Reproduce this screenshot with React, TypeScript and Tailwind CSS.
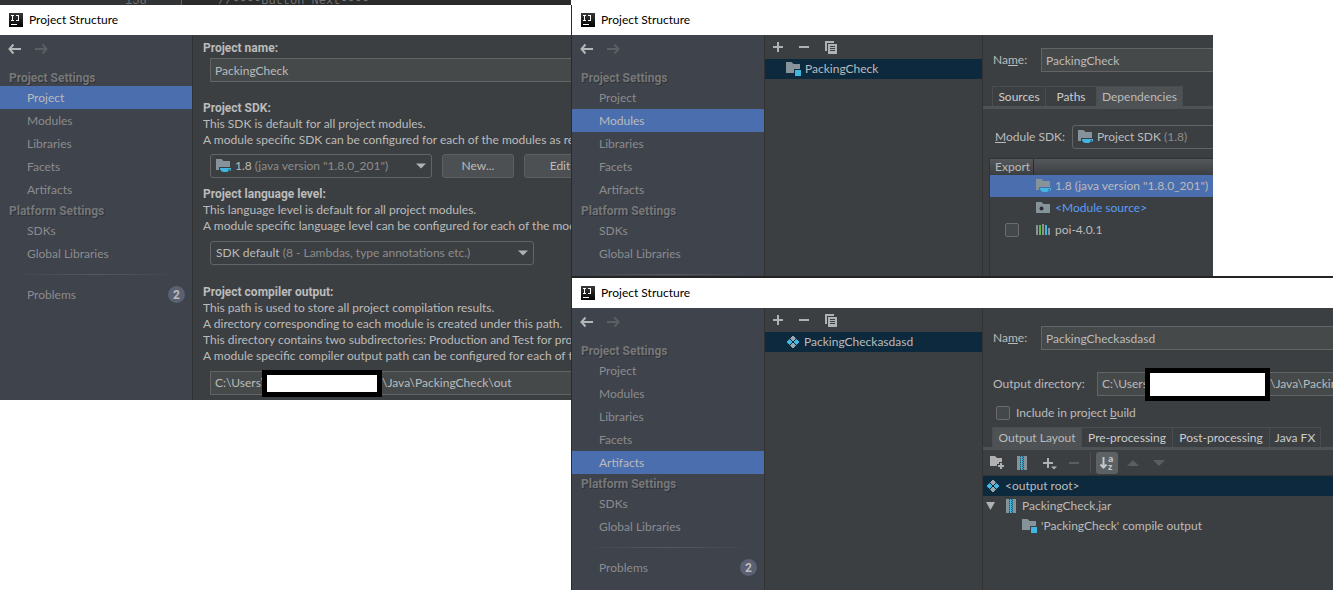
import React from 'react';
import clsx from 'clsx';

type Page = 'Project' | 'Modules' | 'Libraries' | 'Facets' | 'Artifacts';

const projectPages: Page[] = ['Project', 'Modules', 'Libraries', 'Facets', 'Artifacts'];
const platformPages = ['SDKs', 'Global Libraries'];

/* ---------- icons ---------- */

const LogoIcon = () => (
  <svg width="14" height="14" viewBox="0 0 14 14" shapeRendering="crispEdges" className="shrink-0">
    <defs>
      <linearGradient id="logo-bg" x1="0" y1="0" x2="0" y2="1">
        <stop offset="0" stopColor="#3a3a3a" />
        <stop offset="1" stopColor="#000" />
      </linearGradient>
    </defs>
    <rect width="14" height="14" fill="url(#logo-bg)" />
    <path d="M2 2.5h3M3.5 2v6M2 7.5h3M7 2.5h3M9.5 2v5M6.5 7.5h3M2 11.5h6" stroke="#fff" fill="none" />
  </svg>
);

const ArrowIcon = ({ forward }: { forward?: boolean }) => (
  <svg width="13" height="12" viewBox="0 0 13 12" className={forward ? 'rotate-180 text-[#5b5f63]' : 'text-[#b4b6b8]'}>
    <path d="M1.5 6H13M5.5 1.5L1.500 6L5.500 10.5" stroke="currentColor" strokeWidth="2" fill="none" />
  </svg>
);

const PlusIcon = () => (
  <svg width="10" height="10" viewBox="0 0 10 10" shapeRendering="crispEdges">
    <path d="M5 0v10M0 5h10" stroke="#afb1b3" strokeWidth="2" />
  </svg>
);

const MinusIcon = ({ disabled }: { disabled?: boolean }) => (
  <svg width="10" height="10" viewBox="0 0 10 10" shapeRendering="crispEdges">
    <path d="M0 5h10" stroke={disabled ? '#5b5e60' : '#afb1b3'} strokeWidth="2" />
  </svg>
);

const CopyIcon = () => (
  <svg width="12" height="13" viewBox="0 0 12 13" shapeRendering="crispEdges">
    <path d="M0 0h9v2H2v8H0z" fill="#afb1b3" />
    <path d="M3 3h9v10H3z" fill="#afb1b3" />
    <path d="M5 5.5h5M5 7.5h5M5 9.5h5" stroke="#3c3f41" />
  </svg>
);

const ModuleFolderIcon = () => (
  <svg width="15" height="14" viewBox="0 0 15 14" className="shrink-0">
    <path d="M0 0H5.5L7.5 2H14V7H8V11H0Z" fill="#87939a" />
    <rect x="9" y="8" width="6" height="6" fill="#40b6e0" />
  </svg>
);

const SdkFolderIcon = () => (
  <svg width="15" height="14" viewBox="0 0 15 14" className="shrink-0">
    <path d="M0 0H5.5L7.5 2H14V8H3V11H0Z" fill="#87939a" />
    <path d="M4 9H15V11.5H12.5Q11.5 13 10.5 13H7.5Q4 12.5 4 9Z" fill="#40b6e0" />
    <path d="M12.5 10H14V10.8H12.5Z" fill="#3c3f41" />
  </svg>
);

const SourceFolderIcon = () => (
  <svg width="15" height="12" viewBox="0 0 15 12" className="shrink-0">
    <path d="M0 0H5.5L7.5 2H14V11H0Z" fill="#87939a" />
    <circle cx="5.5" cy="6.5" r="2" fill="#2b2d2f" />
  </svg>
);

const NewFolderIcon = () => (
  <svg width="15" height="13" viewBox="0 0 15 13">
    <path d="M0 0H5L7 2H12V6H9V8H7V10H0Z" fill="#afb1b3" />
    <path d="M11 7V13M8 10H14" stroke="#afb1b3" strokeWidth="2" />
  </svg>
);

const LibraryIcon = () => (
  <svg width="14" height="12" viewBox="0 0 14 12" shapeRendering="crispEdges" className="shrink-0">
    <path d="M0 1h2v10H0zM6 0h2v11H6zM12 4h2v7h-2z" fill="#87939a" />
    <rect x="3" y="1" width="2" height="10" fill="#62b543" />
    <rect x="9" y="1" width="2" height="10" fill="#40b6e0" />
  </svg>
);

const ArtifactIcon = () => (
  <svg width="14" height="14" viewBox="0 0 14 14" strokeWidth="1" strokeLinejoin="round" className="shrink-0">
    <path d="M7 1L9.5 3.5L7 6L4.5 3.500ZM7 8L9.5 10.5L7 13L4.5 10.5Z" fill="#9aa7b0" stroke="#9aa7b0" />
    <path d="M3.5 4.500L6 7L3.5 9.5L1 7ZM10.5 4.5L13 7L10.5 9.5L8 7Z" fill="#40b6e0" stroke="#40b6e0" />
  </svg>
);

const ArchiveIcon = () => (
  <svg width="10" height="14" viewBox="0 0 10 14" shapeRendering="crispEdges" className="shrink-0">
    <path d="M0 0h10v14H0z" fill="#87939a" />
    <path d="M3 0h4v14H3z" fill="#2a5568" />
    <path d="M4 0h1v1h1v1h-1v1h1v1h-1v1h1v1h-1v1h1v1h-1v1h1v1h-1v1h1v1h-1v1h1v1h-2z" fill="#40b6e0" />
    <path d="M3 1h1v1h-1zM3 3h1v1h-1zM3 5h1v1h-1zM3 7h1v1h-1zM3 9h1v1h-1zM3 11h1v1h-1zM6 0h1v1h-1zM6 2h1v1h-1zM6 4h1v1h-1zM6 6h1v1h-1zM6 8h1v1h-1zM6 10h1v1h-1zM6 12h1v1h-1z" fill="#3793b4" />
  </svg>
);

const SortIcon = () => (
  <svg width="14" height="14" viewBox="0 0 14 14">
    <path d="M3.5 1V12M0.5 8.5L3.5 11.5L6.5 8.5" stroke="#c4c6c8" strokeWidth="2" fill="none" />
    <text x="8" y="6" fill="#c4c6c8" className="font-['Open_Sans'] text-[9px] font-bold">a</text>
    <text x="8" y="14" fill="#c4c6c8" className="font-['Open_Sans'] text-[9px] font-bold">z</text>
  </svg>
);

const Triangle = ({ up, className }: { up?: boolean; className: string }) => (
  <svg width="12" height="6" viewBox="0 0 12 6" className={clsx('shrink-0', className)}>
    <path d={up ? 'M0 6L6 0L12 6Z' : 'M0 0H12L6 6Z'} fill="currentColor" />
  </svg>
);

/* ---------- shared pieces ---------- */

const boldFont = "font-['Roboto',sans-serif] font-bold";

const TitleBar = () => (
  <header className="flex h-[30px] items-center gap-[6px] bg-white pl-[9px] text-black">
    <LogoIcon />
    <h1>Project Structure</h1>
  </header>
);

const NavItem = ({ label, active }: { label: string; active?: boolean }) => (
  <button
    type="button"
    className={clsx('block h-[23px] w-full pl-[27px] text-left', active ? 'bg-[#4b6eaf] text-[#bbbbbb]' : 'text-[#8c8c8c]')}
  >
    {label}
  </button>
);

const navHeading = clsx(boldFont, 'h-[18px] pt-px pl-[9px] leading-[18px] text-[#777777] [text-shadow:1px_1px_0_#2f333a]');

const Sidebar = ({ active, problems }: { active: Page; problems?: boolean }) => (
  <nav className="w-[193px] shrink-0 border-r border-[#323232] bg-[#3e434c]">
    <div className="mb-[5px] flex h-[28px] items-center gap-[14px] pl-2">
      <button type="button" aria-label="Back"><ArrowIcon /></button>
      <button type="button" aria-label="Forward"><ArrowIcon forward /></button>
    </div>
    <h2 className={navHeading}>Project Settings</h2>
    {projectPages.map((page) => (
      <NavItem key={page} label={page} active={page === active} />
    ))}
    <h2 className={navHeading}>Platform Settings</h2>
    {platformPages.map((page) => (
      <NavItem key={page} label={page} />
    ))}
    <div className="mx-[9px] mt-[9px] mb-px h-px bg-linear-to-r from-transparent via-[#575a5c] to-transparent" />
    {problems && (
      <div className="mt-2 mb-[11px] flex items-center justify-between pr-[7px]">
        <NavItem label="Problems" />
        <span className={clsx('flex size-[17px] shrink-0 items-center justify-center rounded-full bg-[#5b6073] text-[#bbbbbb]', boldFont)}>2</span>
      </div>
    )}
  </nav>
);

const ItemList = ({ icon, name }: { icon: React.ReactNode; name: string }) => (
  <div className="w-[218px] shrink-0 border-r border-[#323232]">
    <div className="flex h-[24px] items-center gap-4 pl-2">
      <button type="button" aria-label="Add"><PlusIcon /></button>
      <button type="button" aria-label="Remove"><MinusIcon /></button>
      <button type="button" aria-label="Copy"><CopyIcon /></button>
    </div>
    <div className="flex h-[20px] items-center gap-1 bg-[#0d293e] pl-[21px]">
      {icon}
      <span>{name}</span>
    </div>
  </div>
);

const fieldBox = 'h-[24px] border border-[#646464] bg-[#45494a] pl-1';

type PathFieldProps = { id: string; start: string; end: string; startWidth: string; maskSize: string; className: string };

/* path field with the user name blacked out */
const PathField = ({ id, start, end, startWidth, maskSize, className }: PathFieldProps) => (
  <div className={clsx('flex items-center border-r-0', fieldBox, className)}>
    <input id={id} defaultValue={start} className={clsx('shrink-0 bg-transparent outline-none', startWidth)} />
    <span className={clsx('shrink-0 border-[5px] border-black bg-white', maskSize)} />
    <input aria-label="Path end" defaultValue={end} className="min-w-0 flex-1 bg-transparent outline-none" />
  </div>
);

type ComboProps = { id: string; value: string; hint: string; icon?: React.ReactNode; className: string };

const Combo = ({ id, value, hint, icon, className }: ComboProps) => (
  <div className={clsx('relative flex h-[24px] items-center gap-1 rounded-[3px] border border-[#646464] px-[5px]', className)}>
    {icon}
    <span className="flex-1 whitespace-nowrap">
      {value} <span className="text-[#8c8c8c]">{hint}</span>
    </span>
    <Triangle className="w-[10px] text-[#afb1b3]" />
    <select id={id} className="absolute inset-0 w-full opacity-0">
      <option value={value} aria-label={value} />
    </select>
  </div>
);

const Tabs = ({ tabs, active }: { tabs: { label: string; width: string }[]; active: string }) => (
  <div role="tablist" className="flex border-b-[3px] border-[#4e5254] pl-[9px]">
    {tabs.map(({ label, width }) => (
      <button
        key={label}
        type="button"
        role="tab"
        aria-selected={label === active}
        className={clsx(
          'h-[20px] shrink-0 border-t border-r border-[#494d4f] leading-[20px] whitespace-nowrap',
          width,
          label === active ? 'bg-[#4e5254]' : 'bg-[#3c3f41] text-[#cccccc]',
        )}
      >
        {label}
      </button>
    ))}
  </div>
);

const Section = ({ title, lines, className }: { title: string; lines: string[]; className?: string }) => (
  <div className={clsx('leading-4 whitespace-nowrap', className)}>
    <h3 className={boldFont}>{title}</h3>
    {lines.map((line) => (
      <p key={line}>{line}</p>
    ))}
  </div>
);

const pushButton = 'h-[24px] shrink-0 rounded-[3px] border border-[#5e6060] bg-[#4c5052] text-center';

/* ---------- windows ---------- */

const ProjectWindow = () => (
  <section>
    <TitleBar />
    <div className="flex bg-[#3c3f41] text-[#bbbbbb]">
      <Sidebar active="Project" problems />
      <div className="min-w-0 flex-1 overflow-hidden pt-[5px] pb-[5px] pl-[10px]">
        <label htmlFor="project-name" className={clsx('block leading-4', boldFont)}>Project name:</label>
        <div className="mt-[2px] ml-[7px]">
          <input id="project-name" defaultValue="PackingCheck" className={clsx('block w-full border-r-0', fieldBox)} />
        </div>
        <Section
          className="mt-[18px]"
          title="Project SDK:"
          lines={[
            'This SDK is default for all project modules.',
            'A module specific SDK can be configured for each of the modules as required.',
          ]}
        />
        <div className="mt-[6px] ml-[7px] flex gap-[10px]">
          <Combo id="project-sdk" icon={<SdkFolderIcon />} value="1.8" hint='(java version "1.8.0_201")' className="w-[222px] shrink-0" />
          <button type="button" className={clsx('w-[72px]', pushButton)}>New...</button>
          <button type="button" className={clsx('w-[72px]', pushButton)}>Edit</button>
        </div>
        <Section
          className="mt-2"
          title="Project language level:"
          lines={[
            'This language level is default for all project modules.',
            'A module specific language level can be configured for each of the modules as required.',
          ]}
        />
        <Combo id="language-level" value="SDK default" hint="(8 - Lambdas, type annotations etc.)" className="mt-[7px] ml-[7px] w-[324px]" />
        <Section
          className="mt-[19px]"
          title="Project compiler output:"
          lines={[
            'This path is used to store all project compilation results.',
            'A directory corresponding to each module is created under this path.',
            'This directory contains two subdirectories: Production and Test for production code and test sources.',
            'A module specific compiler output path can be configured for each of the modules as required.',
          ]}
        />
        <PathField
          id="compiler-output"
          start="C:\Users\"
          end="\Java\PackingCheck\out"
          startWidth="w-[47px]"
          maskSize="h-[27px] w-[120px]"
          className="mt-[7px] ml-[7px]"
        />
      </div>
    </div>
  </section>
);

const ModulesWindow = () => (
  <section>
    <TitleBar />
    <div className="mr-[120px] flex bg-[#3c3f41] text-[#bbbbbb]">
      <Sidebar active="Modules" />
      <ItemList icon={<ModuleFolderIcon />} name="PackingCheck" />
      <div className="flex min-w-0 flex-1 flex-col overflow-hidden pt-[13px]">
        <div className="flex items-center pl-[10px]">
          <label htmlFor="module-name" className="w-[48px] shrink-0">Na<u>m</u>e:</label>
          <input id="module-name" defaultValue="PackingCheck" className={clsx('min-w-0 flex-1 border-r-0', fieldBox)} />
        </div>
        <div className="mt-[14px]">
          <Tabs
            active="Dependencies"
            tabs={[
              { label: 'Sources', width: 'w-[54px] border-l' },
              { label: 'Paths', width: 'w-[51px]' },
              { label: 'Dependencies', width: 'w-[86px]' },
            ]}
          />
        </div>
        <div className="mt-4 flex items-center pl-[12px]">
          <label htmlFor="module-sdk" className="w-[77px] shrink-0"><u>M</u>odule SDK:</label>
          <Combo id="module-sdk" icon={<SdkFolderIcon />} value="Project SDK" hint="(1.8)" className="w-[240px] shrink-0" />
        </div>
        <div className="mt-[9px] ml-[6px] flex-1 border-t border-l border-[#323232]">
          <table className="w-full table-fixed border-collapse">
            <thead>
              <tr className="h-[16px] bg-linear-to-b from-[#55585a] to-[#3c3f41] leading-4">
                <th className="w-[43px] border-r border-[#2b2b2b] pl-[5px] text-left font-normal">Export</th>
                <th aria-label="Dependency" />
              </tr>
            </thead>
            <tbody>
              <tr className="h-[22px] bg-[#4b6eaf]">
                <td />
                <td className="pl-[3px]"><div className="flex items-center gap-1 whitespace-nowrap"><SdkFolderIcon />1.8 (java version "1.8.0_201")</div></td>
              </tr>
              <tr className="h-[22px]">
                <td />
                <td className="pl-[3px] text-[#589df6]"><div className="flex items-center gap-1"><SourceFolderIcon />&lt;Module source&gt;</div></td>
              </tr>
              <tr className="h-[22px]">
                <td className="pl-[15px]">
                  <input type="checkbox" aria-label="Export poi-4.0.1" className="block size-[14px] appearance-none rounded-[2px] border border-[#6b6b6b] bg-[#43494a]" />
                </td>
                <td className="pl-[3px]"><div className="flex items-center gap-[5px]"><LibraryIcon />poi-4.0.1</div></td>
              </tr>
            </tbody>
          </table>
        </div>
      </div>
    </div>
  </section>
);

const ArtifactsWindow = () => (
  <section className="border-t-2 border-[#242424]">
    <TitleBar />
    <div className="flex bg-[#3c3f41] text-[#bbbbbb]">
      <Sidebar active="Artifacts" problems />
      <ItemList icon={<ArtifactIcon />} name="PackingCheckasdasd" />
      <div className="min-w-0 flex-1 overflow-hidden pt-[18px]">
        <div className="flex items-center pl-[10px]">
          <label htmlFor="artifact-name" className="w-[48px] shrink-0">Na<u>m</u>e:</label>
          <input id="artifact-name" defaultValue="PackingCheckasdasd" className={clsx('min-w-0 flex-1 border-r-0', fieldBox)} />
        </div>
        <div className="mt-[22px] flex items-center pl-[10px]">
          <label htmlFor="output-dir" className="w-[104px] shrink-0">Output directory:</label>
          <PathField
            id="output-dir"
            start="C:\Users"
            end="\Java\PackingCheck\out"
            startWidth="w-[43px]"
            maskSize="h-[33px] w-[125px]"
            className="min-w-0 flex-1"
          />
        </div>
        <div className="mt-[9px] flex items-center gap-[6px] pl-[13px]">
          <input id="include-build" type="checkbox" className="size-[14px] appearance-none rounded-[2px] border border-[#6b6b6b] bg-[#43494a]" />
          <label htmlFor="include-build" className="leading-4">Include in project <u>b</u>uild</label>
        </div>
        <div className="mt-[6px]">
          <Tabs
            active="Output Layout"
            tabs={[
              { label: 'Output Layout', width: 'w-[90px] border-l' },
              { label: 'Pre-processing', width: 'w-[91px]' },
              { label: 'Post-processing', width: 'w-[97px]' },
              { label: 'Java FX', width: 'w-[51px]' },
            ]}
          />
        </div>
        <div className="flex h-[26px] items-center border-b border-[#323232] pl-[7px]">
          <button type="button" aria-label="New folder"><NewFolderIcon /></button>
          <button type="button" aria-label="New archive" className="ml-3"><ArchiveIcon /></button>
          <button type="button" aria-label="Add copy" className="ml-4 flex items-end">
            <PlusIcon />
            <Triangle className="-mr-[2px] -mb-[3px] -ml-[2px] w-[6px] text-[#afb1b3]" />
          </button>
          <button type="button" aria-label="Remove" className="ml-[14px]"><MinusIcon disabled /></button>
          <span className="mr-[5px] ml-[11px] h-5 w-px bg-[#515151]" />
          <button type="button" aria-label="Sort" className="flex size-[22px] items-center justify-center rounded-[3px] bg-[#5c6164]"><SortIcon /></button>
          <button type="button" aria-label="Move up" className="ml-[9px]"><Triangle up className="text-[#5b5e60]" /></button>
          <button type="button" aria-label="Move down" className="ml-[14px]"><Triangle className="text-[#5b5e60]" /></button>
        </div>
        <ul role="tree">
          <li className="flex h-5 items-center gap-[5px] bg-[#0d293e] pl-[3px]"><ArtifactIcon />&lt;output root&gt;</li>
          <li className="flex h-5 items-center pl-[3px]">
            <svg width="9" height="8" viewBox="0 0 9 8"><path d="M0 0H9L4.500 8Z" fill="#afb1b3" /></svg>
            <span className="ml-[11px] flex items-center gap-[6px]"><ArchiveIcon />PackingCheck.jar</span>
          </li>
          <li className="flex h-5 items-center gap-1 pl-[39px]"><ModuleFolderIcon />'PackingCheck' compile output</li>
        </ul>
      </div>
    </div>
  </section>
);

/* sliver of the editor that shows above the first window */
const EditorStrip = () => (
  <div className="flex h-[5px] items-end overflow-hidden bg-[#2b2b2b] font-['Liberation_Mono',monospace] leading-[8px] text-[#6f7375]">
    <span className="h-full w-[118px] bg-[#303234]" />
    <span className="w-[64px] border-r border-[#606366] bg-[#313335] pl-[7px]">158</span>
    <span className="pl-[36px]">//----Button Next----</span>
  </div>
);

export default function App() {
  return (
    <main className="grid grid-cols-[571fr_762fr] items-start bg-white font-['Lato',sans-serif] text-[12px] leading-4">
      <div className="min-w-0">
        <EditorStrip />
        <ProjectWindow />
      </div>
      <div className="mt-[5px] min-w-0 border-l border-[#2b2b2b]">
        <ModulesWindow />
        <ArtifactsWindow />
      </div>
    </main>
  );
}
